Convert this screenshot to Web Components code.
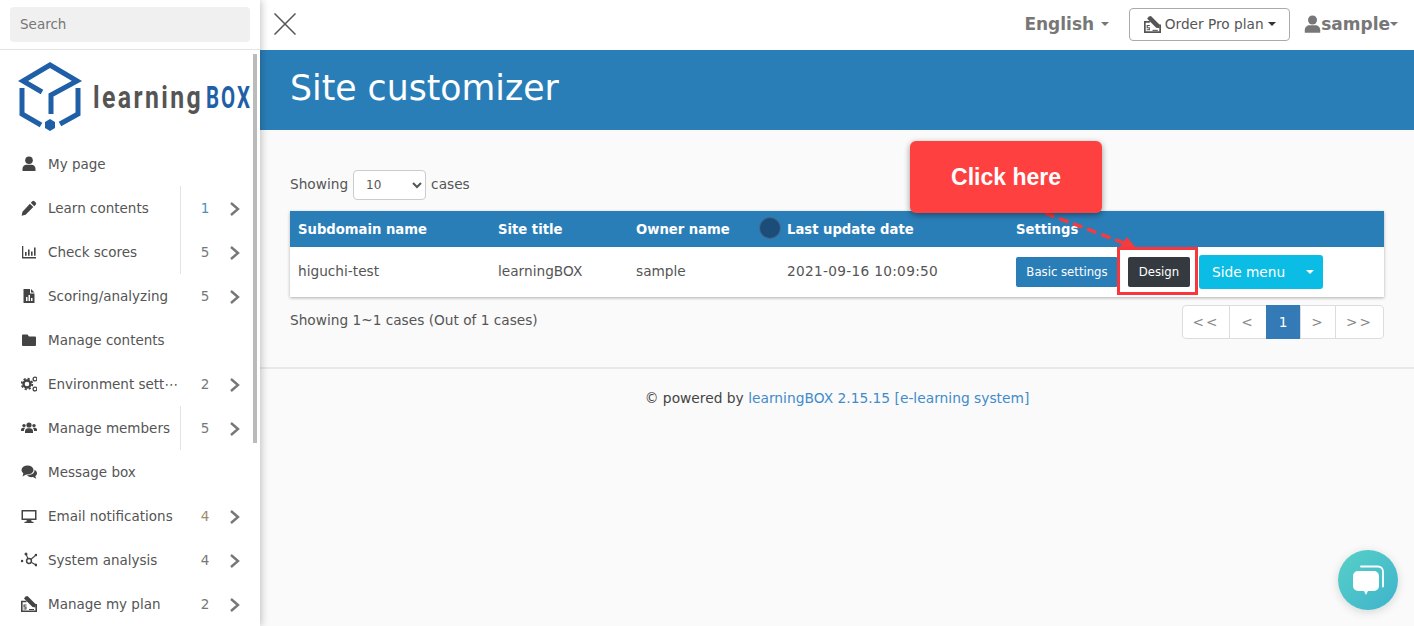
<!DOCTYPE html>
<html lang="en">
<head>
<meta charset="UTF-8">
<title>Site customizer</title>
<style>
  html, body { margin: 0; height: 100%; overflow: hidden; background: #fff; }
  body { font-family: "DejaVu Sans", Verdana, sans-serif; font-size: 13.7px; color: #555; }
</style>
</head>
<body>
<app-shell>
  <side-bar slot="side">
    <nav-item icon="user" label="My page"></nav-item>
    <nav-item icon="pencil" label="Learn contents" count="1" count-color="#4a90c2" rule></nav-item>
    <nav-item icon="chart" label="Check scores" count="5" rule></nav-item>
    <nav-item icon="file" label="Scoring/analyzing" count="5"></nav-item>
    <nav-item icon="folder" label="Manage contents"></nav-item>
    <nav-item icon="cogs" label="Environment sett⋯" count="2"></nav-item>
    <nav-item icon="users" label="Manage members" count="5" rule></nav-item>
    <nav-item icon="comments" label="Message box"></nav-item>
    <nav-item icon="desktop" label="Email notifications" count="4" count-color="#a08a6a"></nav-item>
    <nav-item icon="nodes" label="System analysis" count="4"></nav-item>
    <nav-item icon="plan" label="Manage my plan" count="2"></nav-item>
  </side-bar>
  <top-bar></top-bar>
  <page-hero>Site customizer</page-hero>
  <customizer-panel></customizer-panel>
  <page-footer></page-footer>
  <help-callout></help-callout>
  <chat-button></chat-button>
</app-shell>

<script>
  // iconos dibujados a mano, viewBox 0 0 16 16
  const ICONS = {
    user: '<circle cx="8" cy="4.2" r="3.8"/><path d="M1.5 15v-2.2C1.5 10.2 3.6 8.7 5.5 8.7h5c1.900 0 4 1.500 4 4.100V15z"/>',
    pencil: '<path d="M11.300 1.300a1.500 1.500 0 0 1 2.100 0l1.300 1.300a1.500 1.500 0 0 1 0 2.100l-1.500 1.500-3.400-3.400zM8.900 3.700l3.400 3.400-7.700 7.700-4 .9.900-4z"/>',
    chart: '<path d="M1 2h1.300v11H15v1.400H1z"/><path d="M4 8h1.600v3.800H4zM7 5.500h1.600v6.300H7zM10 7.500h1.600v4.300H10zM13 3.500h1.600v8.300H13z"/>',
    file: '<path fill-rule="evenodd" d="M2.500 1H9v4.500h4.500V15h-11zM5 9v4h1.500V9zM7.500 7v6H9V7zM10 10v3h1.500v-3z"/><path d="M10 1l3.500 3.500H10z"/>',
    folder: '<path d="M1 3.500A1 1 0 0 1 2 2.500h4.500L8 4.500h6a1 1 0 0 1 1 1v7.500a1 1 0 0 1-1 1H2a1 1 0 0 1-1-1z"/>',
    cogs: '<g fill="none" stroke="currentColor"><circle cx="6" cy="8" r="3.500" stroke-width="2.400"/><circle cx="6" cy="8" r="5.300" stroke-width="1.800" stroke-dasharray="2.160 2"/><circle cx="14" cy="3" r="1.900" stroke-width="1.300"/><circle cx="14" cy="13" r="1.900" stroke-width="1.300"/></g>',
    users: '<circle cx="8" cy="5" r="2.600"/><circle cx="3" cy="5.600" r="1.700"/><circle cx="13" cy="5.600" r="1.700"/><path d="M4 13v-1.800c0-1.900 1.500-3 3-3h2c1.500 0 3 1.100 3 3V13z"/><path d="M0 11V9.800C0 8.500 1 7.800 2 7.800h1.500c.3 0 .6.100.8.300C3.300 8.800 2.900 9.900 2.900 11zM16 11V9.800c0-1.300-1-2-2-2h-1.500c-.3 0-.6.100-.8.300 1 .700 1.400 1.800 1.400 2.900z"/>',
    comments: '<ellipse cx="6.500" cy="6" rx="6" ry="4.600"/><path d="M2.500 9L1.500 12.500 6 10z"/><path d="M13.500 5.800c1.500.8 2.500 2 2.500 3.500 0 1.200-.7 2.200-1.700 3l1 2.400-3.400-1.600c-3 .5-5-.5-6-2 4 .3 8-1.500 7.600-5.300z"/>',
    desktop: '<path fill-rule="evenodd" d="M.5 2h15v10h-5.300l.5 1.800h1.800V15H3.500v-1.200h1.800l.5-1.800H.5zm1.500 1.500v7h12v-7z"/>',
    nodes: '<circle cx="1" cy="9" r="1.300"/><circle cx="5" cy="2" r="1.500"/><circle cx="15" cy="3" r="1.300"/><circle cx="15" cy="13" r="1.400"/><path d="M5 2l3 7M8 9l7-6M8 9l7 4" stroke="currentColor" stroke-width="1.100" fill="none"/><circle cx="8" cy="9" r="2.400" fill="#fff" stroke="currentColor" stroke-width="1.500"/>',
    plan: '<path d="M5.500 5.500H.8v9.700h14.400V8" fill="none" stroke="currentColor" stroke-width="1.600"/><path d="M4.500 .5l2-.5 8.500 8.500-.5 3-3-.5L3 2.500z"/><path d="M2.500 8.500h3v1h-2v1h2v3h-3v-1h2v-1h-2z"/><path d="M8 13h5v1H8z"/>'
  };

  function icon(name, size) {
    return `<svg width="${size}" height="${size}" viewBox="0 0 16 16" fill="currentColor" aria-hidden="true">${ICONS[name]}</svg>`;
  }

  class AppShell extends HTMLElement {
    constructor() {
      super();
      this.attachShadow({ mode: 'open' });
      this.shadowRoot.innerHTML = `
        <style>
          :host { display: flex; position: relative; width: 1414px; height: 626px; overflow: hidden; }
          .main { flex: 1; display: flex; flex-direction: column; min-width: 0; background: #fafafa; }
        </style>
        <slot name="side"></slot>
        <div class="main"><slot></slot></div>
      `;
    }
  }

  class SideBar extends HTMLElement {
    constructor() {
      super();
      this.attachShadow({ mode: 'open' });
      this.shadowRoot.innerHTML = `
        <style>
          :host { display: flex; flex-direction: column; position: relative; z-index: 2; width: 260px; flex: none; height: 626px; overflow: hidden; background: #fff; box-shadow: 1px 0 8px rgba(0,0,0,.25); }
          .search { height: 50px; border-bottom: 1px solid #e4e4e4; padding: 7px 10px 0; box-sizing: border-box; flex: none; }
          .search input { display: block; width: 240px; height: 35px; box-sizing: border-box; border: 0; border-radius: 4px; background: #f0f0f0; padding: 0 10px 2px; font: 13.5px "DejaVu Sans", sans-serif; color: #555; outline: none; }
          .search input::placeholder { color: #777; opacity: 1; }
          .logo { height: 92px; flex: none; }
          .logo svg { display: block; }
          .thumb { position: absolute; left: 253px; top: 54px; width: 4px; height: 389px; background: #bbb; }
        </style>
        <div class="search"><input placeholder="Search"></div>
        <div class="logo">
          <svg width="260" height="92" viewBox="0 50 260 92">
            <g fill="none" stroke="#1f5fa8" stroke-width="5">
              <polyline points="42,92 23,81 50,65 77,81 51,95 51,114"/>
              <polyline points="22,88 22,114 41,125"/>
              <polyline points="78,88 78,114 60,124"/>
            </g>
            <polygon points="50,119 55,122 55,128 50,131 45,128 45,122" fill="#1f5fa8"/>
            <text transform="translate(93 108) scale(.8 1)" letter-spacing="3" font-family="Roboto, sans-serif" font-weight="700" font-size="31" fill="#555">learning</text>
            <text transform="translate(206 108) scale(.66 1)" letter-spacing="3" font-family="Roboto, sans-serif" font-weight="700" font-size="31" fill="#1f5fa8">BOX</text>
          </svg>
        </div>
        <slot></slot>
        <div class="thumb"></div>
      `;
    }
  }

  class NavItem extends HTMLElement {
    constructor() {
      super();
      this.attachShadow({ mode: 'open' });
    }

    connectedCallback() {
      const count = this.getAttribute('count');
      const countColor = this.getAttribute('count-color') || '#777';
      this.shadowRoot.innerHTML = `
        <style>
          :host { display: flex; align-items: center; height: 44px; flex: none; padding-left: 20px; font-size: 13.5px; color: #555; }
          .ico { width: 18px; height: 18px; display: flex; align-items: center; justify-content: center; margin-right: 10px; color: #444; flex: none; }
          .label { width: 132px; white-space: nowrap; flex: none; }
          .side { display: flex; align-items: center; height: 44px; width: 62px; flex: none; box-sizing: border-box; border-left: 1px solid transparent; }
          .side.rule { border-left-color: #e4e4e4; }
          .side.blank { visibility: hidden; }
          .count { width: 48px; text-align: center; color: ${countColor}; }
          .chev { flex: none; margin-top: 2px; }
        </style>
        <span class="ico">${icon(this.getAttribute('icon'), 16)}</span>
        <span class="label">${this.getAttribute('label')}</span>
        <span class="side ${this.hasAttribute('rule') ? 'rule' : ''} ${count ? '' : 'blank'}">
          <span class="count">${count || ''}</span>
          <svg class="chev" width="12" height="16" viewBox="0 0 12 16" fill="none" stroke="#777" stroke-width="2.400"><polyline points="2,2 9,8 2,14"/></svg>
        </span>
      `;
    }
  }

  class TopBar extends HTMLElement {
    constructor() {
      super();
      this.attachShadow({ mode: 'open' });
      this.shadowRoot.innerHTML = `
        <style>
          :host { display: flex; align-items: center; box-sizing: border-box; height: 50px; flex: none; background: #fff; padding: 0 16px 2px 14px; color: #777; }
          .close { display: block; flex: none; }
          .spacer { flex: 1; }
          .lang { font-weight: 700; font-size: 17px; color: #777; display: flex; align-items: center; }
          .caret { display: inline-block; width: 0; height: 0; border-left: 4px solid transparent; border-right: 4px solid transparent; border-top: 4px solid currentColor; }
          .lang .caret { margin-left: 7px; }
          .order { display: flex; align-items: center; justify-content: center; box-sizing: border-box; width: 161px; height: 33px; margin: 0 13px 0 20px; border: 1px solid #aaa; border-radius: 4px; background: #fff; color: #555; font-size: 13.7px; }
          .order svg { margin-right: 4px; }
          .order .caret { margin-left: 4px; border-top-color: #333; }
          .me { display: flex; align-items: center; font-weight: 700; font-size: 17px; color: #777; }
          .me svg { margin-right: -1px; }
        </style>
        <svg class="close" width="22" height="22" viewBox="0 0 22 22" fill="none" stroke="#555" stroke-width="1.500"><path d="M0.500 0.500L21.500 21.500M21.500 0.500L0.500 21.500"/></svg>
        <span class="spacer"></span>
        <span class="lang">English<span class="caret"></span></span>
        <span class="order">${icon('plan', 17)}Order Pro plan<span class="caret"></span></span>
        <span class="me">${icon('user', 19)}sample<span class="caret"></span></span>
      `;
    }
  }

  class PageHero extends HTMLElement {
    constructor() {
      super();
      this.attachShadow({ mode: 'open' });
      this.shadowRoot.innerHTML = `
        <style>
          :host { display: flex; align-items: center; box-sizing: border-box; height: 80px; flex: none; padding: 0 0 4px 30px; background: #2a7eb8; color: #fff; font-size: 34.700px; }
        </style>
        <slot></slot>
      `;
    }
  }

  class CustomizerPanel extends HTMLElement {
    constructor() {
      super();
      this.attachShadow({ mode: 'open' });
      this.shadowRoot.innerHTML = `
        <style>
          :host { display: block; flex: none; padding: 40px 30px 28px; border-bottom: 2px solid #e8e8e8; color: #555; font-size: 13.7px; }
          .length { display: flex; align-items: center; gap: 5px; box-sizing: border-box; height: 30px; padding-bottom: 2px; margin-bottom: 11px; }
          select { width: 73px; height: 30px; margin-top: 2px; box-sizing: border-box; border: 1px solid #ccc; border-radius: 4px; background: #fff; color: #555; padding: 0 8px; font: 12px "DejaVu Sans", sans-serif; }
          table { width: 1094px; border-collapse: collapse; table-layout: fixed; background: #fff; box-shadow: 0 1px 3px rgba(0,0,0,.3); }
          th { height: 36px; padding: 0 8px; background: #2a7eb8; color: #fff; text-align: left; font-size: 13.200px; font-weight: 700; white-space: nowrap; }
          td { height: 50px; box-sizing: border-box; padding: 0 8px; white-space: nowrap; color: #555; }
          td:not(:last-child) { padding-bottom: 2px; }
          .date { letter-spacing: .3px; }
          .actions { display: flex; align-items: center; }
          .btn { display: flex; align-items: center; justify-content: center; height: 30px; box-sizing: border-box; border-radius: 2px; color: #fff; font-size: 11.700px; }
          .basic { width: 102px; background: #2a7eb8; }
          .design { width: 62px; margin-left: 10px; background: #343a40; }
          .sidemenu { width: 124px; height: 34px; margin-left: 9px; background: #0bbde5; font-size: 13.700px; border-radius: 3px; }
          .sidemenu span { flex: 1; padding-left: 13px; }
          .sidemenu i { width: 0; height: 0; margin-right: 9px; border-left: 4px solid transparent; border-right: 4px solid transparent; border-top: 4px solid #fff; }
          .dot { position: absolute; left: 760px; top: 218px; width: 20px; height: 20px; border-radius: 50%; background: #1c4d78; box-shadow: 0 0 0 1px #3d6a92; }
          .summary { display: flex; justify-content: space-between; margin-top: 8px; }
          .summary > span { padding-top: 7px; }
          .pager { display: flex; height: 34px; box-sizing: border-box; border: 1px solid #ddd; border-radius: 4px; background: #fff; color: #888; letter-spacing: 2px; }
          .pager span { display: flex; align-items: center; justify-content: center; border-left: 1px solid #ddd; box-sizing: border-box; }
          .pager span:first-child { border-left: 0; }
          .pager .on { background: #337ab7; color: #fff; border: 0; margin: -1px 0; letter-spacing: 0; }
        </style>
        <div class="length">Showing <select><option>10</option></select> cases</div>
        <table>
          <colgroup><col style="width:200px"><col style="width:138px"><col style="width:151px"><col style="width:229px"><col></colgroup>
          <thead><tr><th>Subdomain name</th><th>Site title</th><th>Owner name</th><th>Last update date</th><th>Settings</th></tr></thead>
          <tbody><tr>
            <td>higuchi-test</td><td>learningBOX</td><td>sample</td><td class="date">2021-09-16 10:09:50</td>
            <td><div class="actions"><span class="btn basic">Basic settings</span><span class="btn design">Design</span><span class="btn sidemenu"><span>Side menu</span><i></i></span></div></td>
          </tr></tbody>
        </table>
        <div class="dot"></div>
        <div class="summary">
          <span>Showing 1~1 cases (Out of 1 cases)</span>
          <div class="pager"><span style="width:46px">&lt;&lt;</span><span style="width:37px">&lt;</span><span class="on" style="width:34px">1</span><span style="width:35px">&gt;</span><span style="width:48px">&gt;&gt;</span></div>
        </div>
      `;
    }
  }

  class PageFooter extends HTMLElement {
    constructor() {
      super();
      this.attachShadow({ mode: 'open' });
      this.shadowRoot.innerHTML = `
        <style>
          :host { display: block; text-align: center; padding-top: 21px; font-size: 13.800px; color: #444; }
          a { color: #428bca; text-decoration: none; }
        </style>
        © powered by <a>learningBOX 2.15.15 [e-learning system]</a>
      `;
    }
  }

  // anotacion roja encima de la tabla
  class HelpCallout extends HTMLElement {
    constructor() {
      super();
      this.attachShadow({ mode: 'open' });
      this.shadowRoot.innerHTML = `
        <style>
          :host { display: block; }
          .box { position: absolute; left: 910px; top: 141px; box-sizing: border-box; padding-top: 1px; width: 192px; height: 72px; display: flex; align-items: center; justify-content: center; border-radius: 6px; background: #ff4040; color: #fff; font: 700 23px "Liberation Sans", sans-serif; box-shadow: 0 2px 6px rgba(0,0,0,.4); }
          .frame { position: absolute; left: 1117px; top: 247px; width: 81px; height: 48px; box-sizing: border-box; border: 3px solid #f8363c; }
          svg { position: absolute; left: 0; top: 0; }
        </style>
        <svg width="1414" height="626" fill="none">
          <line x1="1045" y1="213" x2="1124" y2="243" stroke="#f23c40" stroke-width="3.500" stroke-dasharray="10 5"/>
          <polygon points="1136,248 1119,248 1127,237" fill="#f23c40"/>
        </svg>
        <div class="frame"></div>
        <div class="box">Click here</div>
      `;
    }
  }

  class ChatButton extends HTMLElement {
    constructor() {
      super();
      this.attachShadow({ mode: 'open' });
      this.shadowRoot.innerHTML = `
        <style>
          :host { position: absolute; left: 1338px; top: 550px; width: 60px; height: 60px; border-radius: 50%; display: flex; align-items: center; justify-content: center; background: linear-gradient(135deg, #57d0c6, #3fb3cd); box-shadow: 0 2px 10px rgba(0,0,0,.15); }
        </style>
        <svg width="32" height="32" viewBox="0 0 32 32" fill="none">
          <path d="M9 2.500h17a5 5 0 0 1 5 5v15" stroke="#fff" stroke-width="1.800" stroke-linecap="round"/>
          <path d="M6 7h16a5 5 0 0 1 5 5v10a5 5 0 0 1-5 5h-6l-2 4-2-4H6a5 5 0 0 1-5-5V12a5 5 0 0 1 5-5z" fill="#fff"/>
        </svg>
      `;
    }
  }

  customElements.define('app-shell', AppShell);
  customElements.define('side-bar', SideBar);
  customElements.define('nav-item', NavItem);
  customElements.define('top-bar', TopBar);
  customElements.define('page-hero', PageHero);
  customElements.define('customizer-panel', CustomizerPanel);
  customElements.define('page-footer', PageFooter);
  customElements.define('help-callout', HelpCallout);
  customElements.define('chat-button', ChatButton);
</script>
</body>
</html>
